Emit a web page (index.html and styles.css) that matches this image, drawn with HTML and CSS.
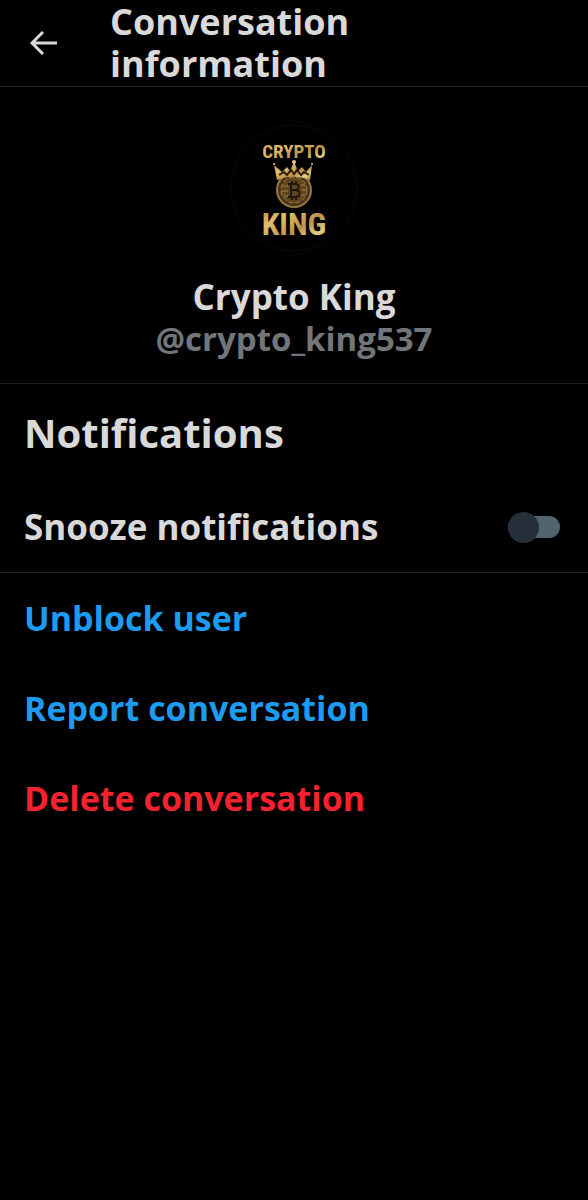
FILE: index.html
```html
<!DOCTYPE html>
<html lang="en">
<head>
  <meta charset="UTF-8">
  <meta name="viewport" content="width=device-width, initial-scale=1">
  <title>Conversation information</title>
  <link rel="stylesheet" href="styles.css">
</head>
<body>

<header class="topbar">
  <button class="back" type="button" aria-label="Back">
    <svg width="28" height="24" viewBox="0 0 28 24" fill="none" stroke="currentColor" stroke-width="3">
      <path d="M27 12H2M13 1L2 12l11 11"/>
    </svg>
  </button>
  <h1>Conversation information</h1>
</header>

<main>
  <section class="profile">
    <svg class="avatar" viewBox="0 0 128 128" role="img" aria-label="Crypto King">
      <defs>
        <linearGradient id="gold" x1="0" y1="0" x2="1" y2="1">
          <stop offset="0" stop-color="#b8783f"/>
          <stop offset="0.3" stop-color="#e0c070"/>
          <stop offset="0.6" stop-color="#c0914a"/>
          <stop offset="0.8" stop-color="#e0cc85"/>
          <stop offset="1" stop-color="#a8753e"/>
        </linearGradient>
      </defs>
      <circle cx="64" cy="64" r="63" fill="#000" stroke="#0b0b0b"/>
      <text class="logo-top" x="64" y="34" text-anchor="middle" fill="url(#gold)">CRYPTO</text>
      <!-- coin -->
      <circle cx="64" cy="66" r="17" fill="#46331a" stroke="#96763f" stroke-width="2"/>
      <circle cx="64" cy="66" r="13" fill="#60451f" stroke="#a5813f" stroke-dasharray="5 2"/>
      <path d="M53 62h5M52 67h6M54 72h4M71 61h4M72 66h4M71 71h4" stroke="#a5813f"/>
      <path d="M61 60v13M58 60h7c5 0 5 6 0 6h-4M65 66c6 0 6 7 0 7h-7M62 57v3M66 57v3M62 73v3M66 73v3" fill="none" stroke="#20170b" stroke-width="2"/>
      <!-- crown -->
      <path d="M47 56L44 41l8 7 5-5 3 4 4-9 4 9 4-4 4 5 6-7-2 15q-17-7-33 0z" fill="url(#gold)"/>
      <path d="M49 51l5-3 3 3 4-5 3 4 3-4 4 5 3-3 5 3" fill="none" stroke="#2c1d0c" stroke-width="2"/>
      <circle cx="44" cy="40" r="1" fill="#e0cc85"/>
      <circle cx="64" cy="38" r="2" fill="#e0cc85"/>
      <circle cx="82" cy="40" r="1" fill="#e0cc85"/>
      <text class="logo-bottom" x="64" y="111" text-anchor="middle" fill="url(#gold)">KING</text>
    </svg>
    <h2 class="name">Crypto King</h2>
    <p class="handle">@crypto_king537</p>
  </section>

  <section class="notifications">
    <h2>Notifications</h2>
    <div class="row">
      <label for="snooze">Snooze notifications</label>
      <input class="switch" id="snooze" type="checkbox" role="switch">
    </div>
  </section>

  <section class="actions">
    <button type="button">Unblock user</button>
    <button type="button">Report conversation</button>
    <button class="danger" type="button">Delete conversation</button>
  </section>
</main>

</body>
</html>
```
FILE: styles.css
```css
* {
  box-sizing: border-box;
}
body {
  margin: 0;
  background: #000;
  color: #d9d9d9;
  font-family: "Open Sans", "Noto Sans", sans-serif;
  font-size: 34px;
  font-weight: 700;
  line-height: 42px;
}
h1, h2, p {
  margin: 0;
}
button {
  padding: 0;
  border: none;
  background: none;
  color: inherit;
  font: inherit;
  cursor: pointer;
}
.topbar {
  display: flex;
  align-items: center;
  gap: 52px;
  padding: 1px 30px;
  border-bottom: 1px solid #222;
}
.topbar h1 {
  max-width: 300px;
  font-size: 36px;
}
.back {
  display: flex;
}
.profile {
  display: flex;
  flex-direction: column;
  align-items: center;
  padding: 37px 24px 23px;
  border-bottom: 1px solid #222;
}
.avatar {
  width: 128px;
  height: 128px;
  margin-bottom: 24px;
}
.logo-top, .logo-bottom {
  font-family: "Roboto Condensed", Roboto, sans-serif;
  font-weight: 700;
}
.logo-top {
  font-size: 19px;
}
.logo-bottom {
  font-size: 32px;
}
.name {
  font-size: 35px;
}
.handle {
  color: #71767b;
  font-size: 33px;
}
.notifications {
  padding: 24px;
  border-bottom: 1px solid #222;
}
.notifications h2 {
  font-size: 40px;
  line-height: 50px;
}
.row {
  display: flex;
  align-items: center;
  justify-content: space-between;
  margin-top: 48px;
}
.row label {
  font-size: 35px;
}
.switch {
  display: flex;
  flex: none;
  align-items: center;
  appearance: none;
  width: 52px;
  height: 22px;
  margin: 0 4px 0 0;
  border-radius: 11px;
  background: #536471;
  cursor: pointer;
}
.switch::before {
  content: "";
  flex: none;
  width: 31px;
  height: 31px;
  border-radius: 50%;
  background: #25303a;
}
.switch:checked {
  justify-content: flex-end;
}
.actions {
  display: flex;
  flex-direction: column;
  align-items: flex-start;
  gap: 48px;
  padding: 24px;
  color: #1d9bf0;
}
.danger {
  color: #f4212e;
}
```
